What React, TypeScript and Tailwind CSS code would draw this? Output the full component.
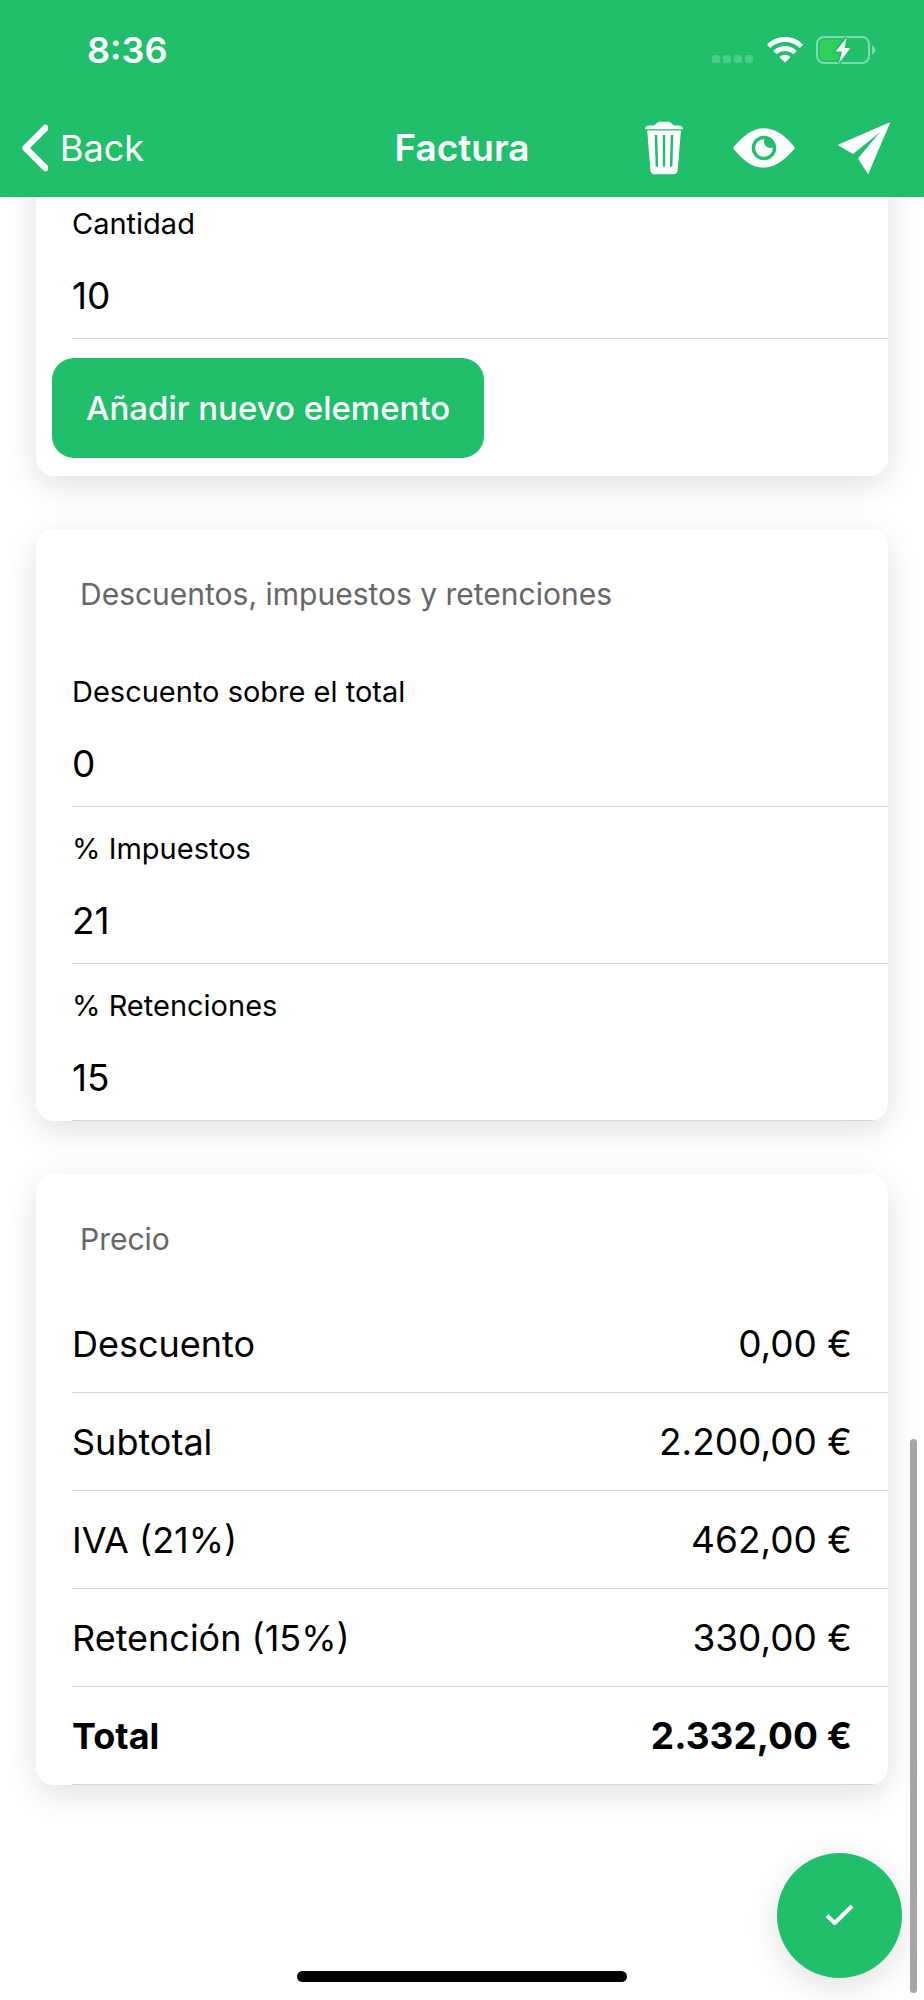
import { useState } from "react";
import type { ReactNode } from "react";
import { IoIosEye, IoIosTrash } from "react-icons/io";

type PriceRow = {
  label: string;
  amount: string;
  isTotal?: boolean;
};

const PRICE_ROWS: PriceRow[] = [
  { label: "Descuento", amount: "0,00 €" },
  { label: "Subtotal", amount: "2.200,00 €" },
  { label: "IVA (21%)", amount: "462,00 €" },
  { label: "Retención (15%)", amount: "330,00 €" },
  { label: "Total", amount: "2.332,00 €", isTotal: true },
];

function StatusBar() {
  return (
    <div className="flex h-[100px] items-center justify-between pr-12 pl-[87px]">
      <span className="text-[36px] leading-10 font-semibold">8:36</span>
      <div className="flex items-center gap-[13px]">
        <svg width="42" height="28" viewBox="0 0 42 28" fill="#fff" fillOpacity="0.2">
          <rect x="0" y="19" width="8" height="8" rx="2.5" />
          <rect x="11" y="19" width="8" height="8" rx="2.5" />
          <rect x="22" y="19" width="8" height="8" rx="2.5" />
          <rect x="33" y="19" width="8" height="8" rx="2.5" />
        </svg>
        <svg width="36" height="28" viewBox="0 0 36 28" fill="#fff">
          <path d="M18 1C24.800 1 31 3.600 35.500 8Q36 8.600 35.500 9.200L33.300 11.400Q32.700 11.900 32.100 11.400C28.300 7.900 23.400 6 18 6S7.700 7.900 3.900 11.400Q3.300 11.900 2.700 11.400L.5 9.200Q0 8.600.5 8C5 3.600 11.200 1 18 1Z" />
          <path d="M18 10C22.300 10 26.200 11.600 29.200 14.300Q29.800 14.900 29.200 15.500L26.900 17.700Q26.300 18.200 25.700 17.700C23.600 15.900 20.900 14.900 18 14.900S12.400 15.900 10.300 17.700Q9.700 18.200 9.100 17.700L6.800 15.500Q6.200 14.900 6.800 14.300C9.800 11.600 13.700 10 18 10Z" />
          <path d="M18 18.700C19.900 18.700 21.600 19.400 22.900 20.500Q23.500 21.100 22.900 21.700L18.600 26.100Q18 26.700 17.400 26.100L13.100 21.700Q12.500 21.100 13.100 20.500C14.400 19.400 16.100 18.700 18 18.700Z" />
        </svg>
        <svg width="60" height="28" viewBox="0 0 60 28">
          <rect x="1" y="1" width="52" height="26" rx="7" fill="none" stroke="#fff" strokeOpacity="0.42" strokeWidth="2" />
          <path d="M56 9.500C58 10.200 59.200 12 59.200 14S58 17.800 56 18.500Z" fill="#fff" fillOpacity="0.42" />
          <rect x="4" y="4" width="24" height="20" rx="4" fill="#30d158" />
          <path
            d="M30.500 2 19.500 15.500H26L23 27 34.500 12H28.500Z"
            fill="#fff"
            stroke="#21bf6b"
            strokeWidth="4"
            paintOrder="stroke"
          />
        </svg>
      </div>
    </div>
  );
}

function PaperPlaneIcon() {
  return (
    <svg width="70" height="70" viewBox="0 0 70 70" fill="currentColor" stroke="currentColor" strokeLinejoin="round">
      <path d="M60.500 10 9.500 32 24 40.500 53 17 29.500 45.500 39 60.500Z" />
    </svg>
  );
}

function CheckIcon() {
  return (
    <svg width="32" height="32" viewBox="0 0 32 32" fill="none" stroke="currentColor" strokeWidth="4" strokeLinejoin="round">
      <path d="M3 15.500 10.800 23 28 6" />
    </svg>
  );
}

function ToolbarButton({ label, children }: { label: string; children: ReactNode }) {
  return (
    <button type="button" aria-label={label} className="flex h-20 w-[100px] items-center justify-center">
      {children}
    </button>
  );
}

function Toolbar() {
  return (
    <div className="grid h-24 grid-cols-[1fr_auto_1fr] items-center">
      <a href="#back" className="flex items-center gap-3 pl-5 text-[36px] leading-10">
        <svg width="28" height="48" viewBox="0 0 28 48" fill="none" stroke="#fff" strokeWidth="6.500" strokeLinecap="round" strokeLinejoin="round">
          <path d="M25.500 4 5.500 24 25.500 44" />
        </svg>
        Back
      </a>
      <h1 className="text-[37px] leading-10 font-semibold">Factura</h1>
      <div className="flex justify-end pr-[10px]">
        <ToolbarButton label="Eliminar">
          <IoIosTrash size={70} />
        </ToolbarButton>
        <ToolbarButton label="Ver">
          <IoIosEye size={70} />
        </ToolbarButton>
        <ToolbarButton label="Enviar">
          <PaperPlaneIcon />
        </ToolbarButton>
      </div>
    </div>
  );
}

function CardTitle({ children }: { children: ReactNode }) {
  return <h2 className="h-[121px] px-11 pt-[45px] text-[30px] leading-10 text-[#666666]">{children}</h2>;
}

type FieldProps = {
  id: string;
  label: string;
  initialValue: string;
};

function Field({ id, label, initialValue }: FieldProps) {
  const [value, setValue] = useState(initialValue);

  return (
    <div className="ml-9 flex h-[157px] flex-col gap-[11px] border-b border-[#d8d8d8] pt-[22px]">
      <label htmlFor={id} className="text-[29px] leading-10">
        {label}
      </label>
      <input
        id={id}
        inputMode="decimal"
        value={value}
        onChange={(event) => setValue(event.target.value)}
        className="h-20 w-full bg-transparent text-[37px] outline-none"
      />
    </div>
  );
}

function PriceTable() {
  return (
    <div className="pl-9">
      <table className="w-full border-separate border-spacing-0 leading-10">
        <tbody>
          {PRICE_ROWS.map((row) => {
            const weight = row.isTotal ? "font-bold" : "font-normal";
            return (
              <tr key={row.label}>
                <th scope="row" className={`h-[98px] border-b border-[#d8d8d8] text-left text-[36px] ${weight}`}>
                  {row.label}
                </th>
                <td className={`h-[98px] border-b border-[#d8d8d8] pr-9 text-right text-[37px] ${weight}`}>
                  {row.amount}
                </td>
              </tr>
            );
          })}
        </tbody>
      </table>
    </div>
  );
}

export default function App() {
  return (
    <div className="relative min-h-screen overflow-hidden bg-white font-['Inter',sans-serif] text-black">
      <header className="relative z-10 border-b border-[#1fb164] bg-[#21bf6b] text-white">
        <StatusBar />
        <Toolbar />
      </header>

      {/* The first card is scrolled partly under the header */}
      <main className="-mt-10 flex flex-col gap-[53px] px-9 pb-[214px]">
        <section className="rounded-b-[18px] bg-white pt-[25px] pb-[18px] shadow-[0_9px_36px_rgba(0,0,0,0.12)]">
          <Field id="cantidad" label="Cantidad" initialValue="10" />
          <button
            type="button"
            className="mt-[19px] ml-4 h-[100px] rounded-[22px] bg-[#21bf6b] px-[34px] text-[33px] leading-10 font-medium text-white"
          >
            Añadir nuevo elemento
          </button>
        </section>

        <section className="overflow-hidden rounded-[18px] bg-white shadow-[0_9px_36px_rgba(0,0,0,0.12)]">
          <CardTitle>Descuentos, impuestos y retenciones</CardTitle>
          <Field id="descuento" label="Descuento sobre el total" initialValue="0" />
          <Field id="impuestos" label="% Impuestos" initialValue="21" />
          <Field id="retenciones" label="% Retenciones" initialValue="15" />
        </section>

        <section className="overflow-hidden rounded-[18px] bg-white shadow-[0_9px_36px_rgba(0,0,0,0.12)]">
          <CardTitle>Precio</CardTitle>
          <PriceTable />
        </section>
      </main>

      <button
        type="button"
        aria-label="Guardar"
        className="fixed right-[22px] bottom-[22px] flex size-[125px] items-center justify-center rounded-full bg-[#21bf6b] text-white shadow-[0_9px_36px_rgba(0,0,0,0.12)]"
      >
        <CheckIcon />
      </button>
      <div className="fixed right-[7px] bottom-[7px] h-[554px] w-[7px] rounded-full bg-[#a5a5a5]" />
      <div className="fixed inset-x-0 bottom-[18px] mx-auto h-[11px] w-[330px] rounded-full bg-black" />
    </div>
  );
}
